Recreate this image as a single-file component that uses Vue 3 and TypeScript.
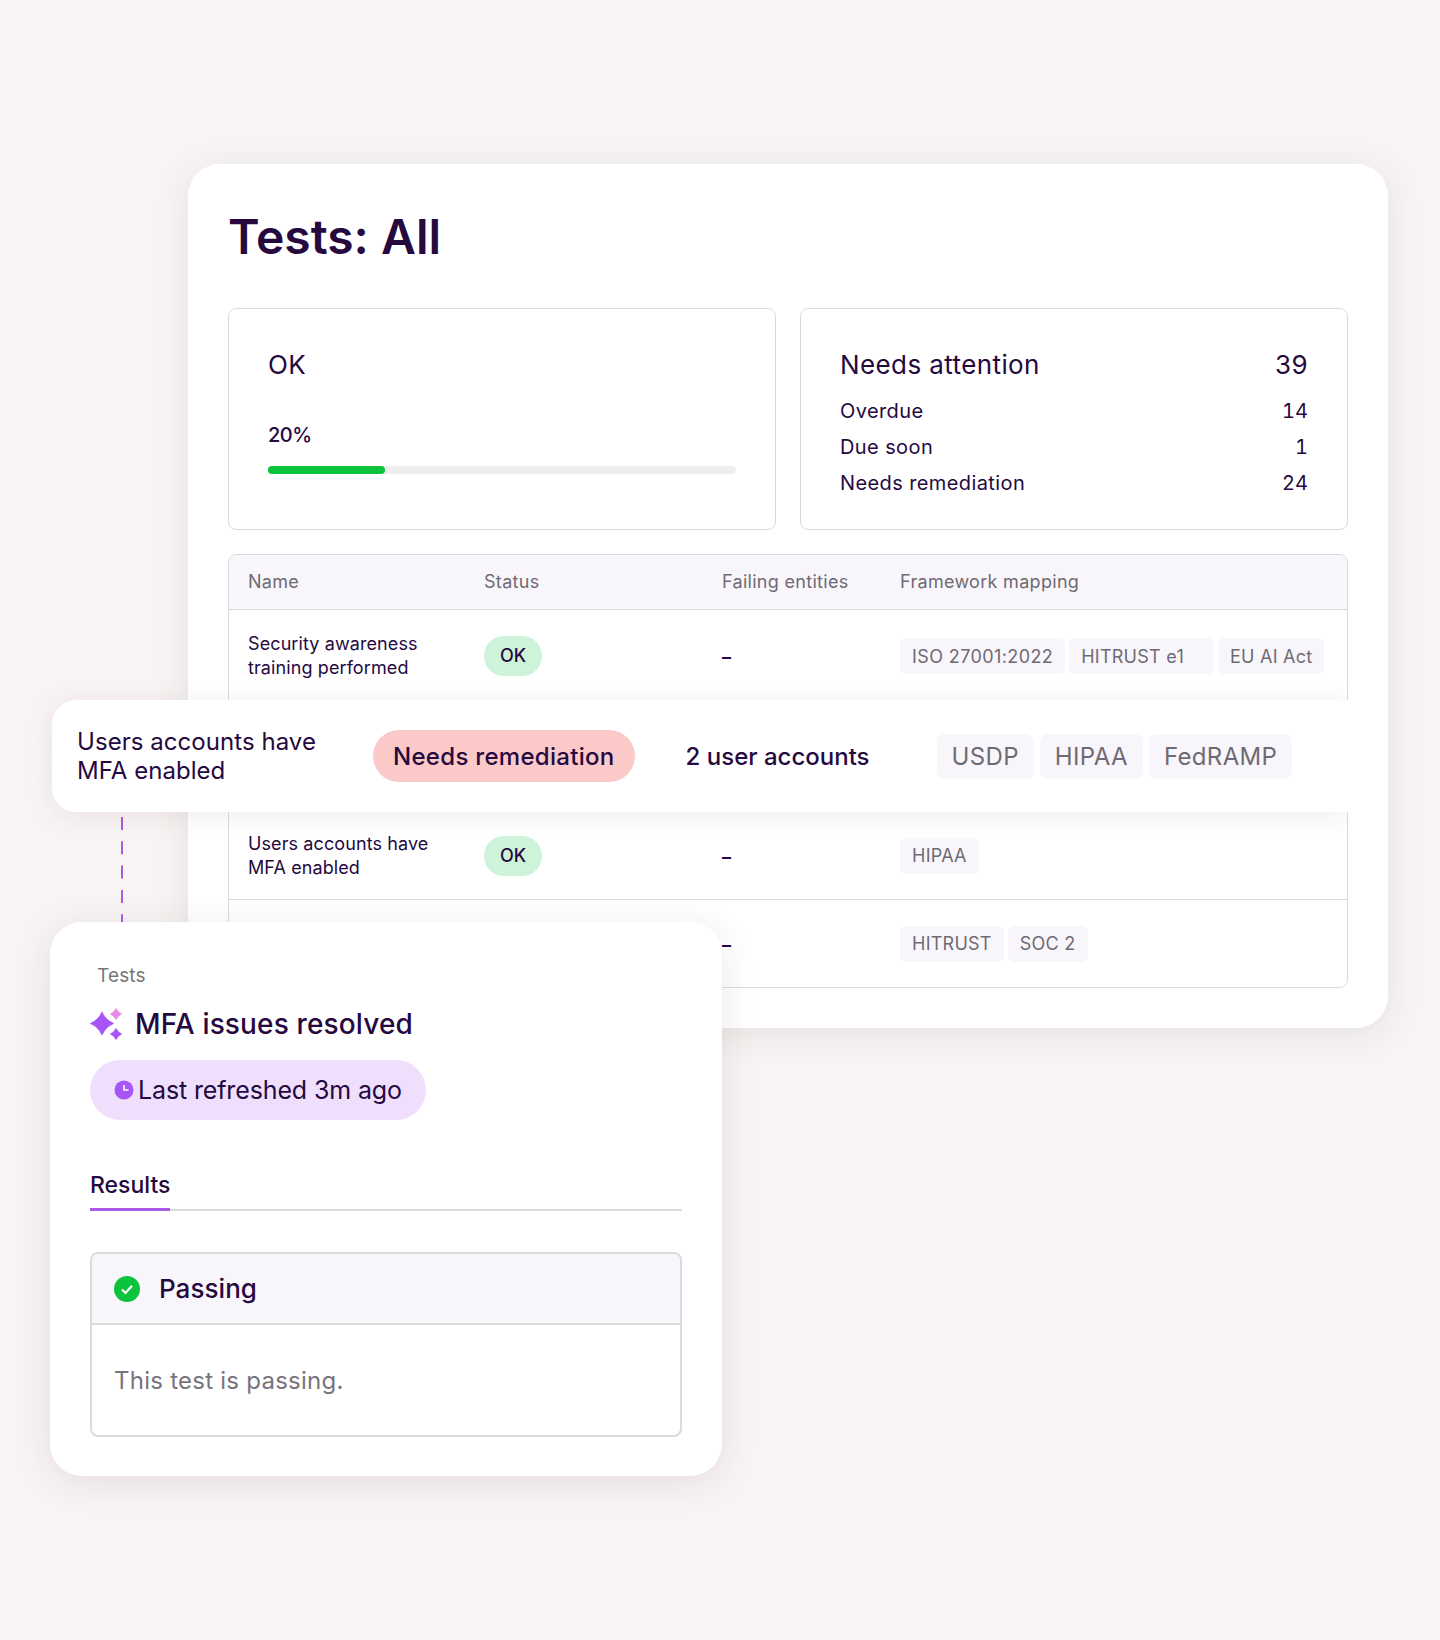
<script setup lang="ts">
interface Row {
  name: string[]
  ok: boolean
  tags: string[]
  cls: string
}
const rows: Row[] = [
  { name: ['Security awareness', 'training performed'], ok: true, tags: ['ISO 27001:2022', 'HITRUST e1', 'EU AI Act'], cls: 'row-a' },
  { name: [], ok: false, tags: [], cls: 'row-b' },
  { name: ['Users accounts have', 'MFA enabled'], ok: true, tags: ['HIPAA'], cls: 'row-c' },
  { name: [], ok: false, tags: ['HITRUST', 'SOC 2'], cls: 'row-d' },
]
const attention = [
  { label: 'Overdue', value: 14 },
  { label: 'Due soon', value: 1 },
  { label: 'Needs remediation', value: 24 },
]
function star(cx: number, cy: number, r: number): string {
  const k = r * 0.3
  return `M${cx} ${cy - r}Q${cx + k} ${cy - k} ${cx + r} ${cy}Q${cx + k} ${cy + k} ${cx} ${cy + r}Q${cx - k} ${cy + k} ${cx - r} ${cy}Q${cx - k} ${cy - k} ${cx} ${cy - r}Z`
}
</script>

<template>
  <div class="stage">
    <section class="main-card">
      <h1 class="title">Tests: All</h1>
      <div class="summary">
        <div class="box">
          <div class="box-head">OK</div>
          <div class="pct">20%</div>
          <div class="track"><div class="fill" :style="{ width: '25%' }"></div></div>
        </div>
        <div class="box">
          <div class="box-head split"><span>Needs attention</span><span>39</span></div>
          <div class="attn">
            <div v-for="a in attention" :key="a.label" class="attn-row">
              <span>{{ a.label }}</span><span class="num">{{ a.value }}</span>
            </div>
          </div>
        </div>
      </div>
      <div class="table">
        <div class="thead grid">
          <span>Name</span><span>Status</span><span>Failing entities</span><span>Framework mapping</span>
        </div>
        <div v-for="(r, i) in rows" :key="i" class="trow grid" :class="r.cls">
          <div class="name"><div v-for="l in r.name" :key="l">{{ l }}</div></div>
          <div><span v-if="r.ok" class="ok">OK</span></div>
          <div class="dash"><span v-if="r.cls !== 'row-b'">–</span></div>
          <div class="tags">
            <span
              v-for="t in r.tags"
              :key="t"
              class="tag"
              :class="{ wide: t === 'HITRUST e1', iso: t === 'ISO 27001:2022' }"
            >{{ t }}</span>
          </div>
        </div>
      </div>
    </section>

    <svg class="connector" width="2" height="110" viewBox="0 0 2 110">
      <line x1="1" y1="5" x2="1" y2="110" stroke="#a95ae6" stroke-width="2" stroke-dasharray="13 11.3" />
    </svg>

    <div class="strip">
      <div class="strip-name">Users accounts have<br />MFA enabled</div>
      <span class="remed">Needs remediation</span>
      <span class="strip-count">2 user accounts</span>
      <div class="strip-tags">
        <span class="big-tag">USDP</span>
        <span class="big-tag">HIPAA</span>
        <span class="big-tag">FedRAMP</span>
      </div>
    </div>

    <section class="detail">
      <div class="crumb">Tests</div>
      <div class="detail-title">
        <svg width="32" height="32" viewBox="0 0 32 32">
          <path :d="star(12, 15.5, 11.6)" fill="#a855f7" stroke="#a855f7" stroke-width="0.8" stroke-linejoin="round" />
          <path :d="star(26, 6, 5.6)" fill="#e78ae6" stroke="#e78ae6" stroke-width="0.8" stroke-linejoin="round" />
          <path :d="star(26, 26, 5.6)" fill="#a855f7" stroke="#a855f7" stroke-width="0.8" stroke-linejoin="round" />
        </svg>
        <span>MFA issues resolved</span>
      </div>
      <div class="refresh">
        <svg width="20" height="20" viewBox="0 0 20 20">
          <circle cx="10" cy="10" r="9.5" fill="#a855f7" />
          <path d="M10 5v5h4.5" fill="none" stroke="#fff" stroke-width="1.6" />
        </svg>
        <span>Last refreshed 3m ago</span>
      </div>
      <div class="tabs"><span class="tab">Results</span></div>
      <div class="result">
        <div class="result-head">
          <svg width="26" height="26" viewBox="0 0 26 26">
            <circle cx="13" cy="13" r="13" fill="#0bc43b" />
            <path d="M8 13.5l3.5 3.5L18 9.8" fill="none" stroke="#fff" stroke-width="2.2" />
          </svg>
          <span>Passing</span>
        </div>
        <div class="result-body">This test is passing.</div>
      </div>
    </section>
  </div>
</template>

<style>
html, body {
  margin: 0;
  background: #f8f4f3;
}
</style>

<style scoped>
.stage {
  position: relative;
  box-sizing: border-box;
  width: 1440px;
  height: 1640px;
  padding: 164px 52px 0 188px;
  background: #f8f4f3;
  font-family: Inter, "Liberation Sans", sans-serif;
  color: #25093f;
}
.main-card {
  box-sizing: border-box;
  width: 1200px;
  height: 864px;
  padding: 40px;
  background: #fff;
  border-radius: 32px;
  box-shadow: 0 6px 36px rgba(60, 40, 40, 0.09);
}
.title {
  margin: 0;
  height: 104px;
  font-size: 48px;
  line-height: 66px;
  font-weight: 600;
}
.summary {
  display: grid;
  grid-template-columns: 548px 548px;
  gap: 24px;
}
.box {
  box-sizing: border-box;
  height: 222px;
  padding: 40px 39px;
  border: 1px solid #dcdadd;
  border-radius: 8px;
}
.box-head {
  font-size: 26px;
  line-height: 32px;
  letter-spacing: 0.4px;
}
.split, .attn-row {
  display: flex;
  justify-content: space-between;
}
.pct {
  margin-top: 39px;
  font-size: 20px;
  line-height: 30px;
  font-weight: 500;
  letter-spacing: -0.5px;
}
.track {
  margin-top: 16px;
  height: 8px;
  border-radius: 4px;
  background: #efeeee;
}
.fill {
  height: 8px;
  border-radius: 4px;
  background: #0bc43b;
}
.attn {
  margin-top: 18px;
  display: flex;
  flex-direction: column;
  gap: 12px;
}
.attn-row {
  font-size: 20px;
  line-height: 24px;
  letter-spacing: 0.4px;
}
.num {
  font-variant-numeric: tabular-nums;
  letter-spacing: 0;
}
.table {
  margin-top: 24px;
  border: 1px solid #dcdadd;
  border-radius: 8px;
  overflow: hidden;
}
.grid {
  display: grid;
  grid-template-columns: 236px 238px 178px 1fr;
  padding-left: 19px;
  align-items: center;
}
.thead {
  box-sizing: border-box;
  height: 55px;
  padding-bottom: 2px;
  background: #f9f6fb;
  border-bottom: 1px solid #dcdadd;
  font-size: 18px;
  letter-spacing: 0.3px;
  color: #6e6a75;
}
.trow {
  box-sizing: border-box;
  font-size: 18px;
  line-height: 24px;
}
.name {
  letter-spacing: 0.1px;
}
.row-a { height: 92px; }
.row-b { height: 110px; }
.row-c { height: 88px; border-bottom: 1px solid #dcdadd; }
.row-d { height: 87px; }
.ok {
  display: inline-flex;
  align-items: center;
  justify-content: center;
  width: 58px;
  height: 40px;
  border-radius: 20px;
  background: #cdf3d8;
  font-weight: 500;
}
.dash {
  padding-top: 2px;
  font-weight: 600;
}
.tags {
  display: flex;
  gap: 4px;
}
.tag {
  box-sizing: border-box;
  display: inline-flex;
  align-items: center;
  height: 36px;
  padding: 1px 12px 0;
  border-radius: 6px;
  background: #f9f6fb;
  color: #6e6a75;
  letter-spacing: 0.25px;
}
.tag.iso {
  letter-spacing: 0.4px;
}
.tag.wide {
  padding-right: 30px;
}
.connector {
  position: absolute;
  left: 121px;
  top: 812px;
}
.strip {
  position: absolute;
  left: 52px;
  top: 700px;
  width: 1296px;
  height: 112px;
  box-sizing: border-box;
  padding-left: 25px;
  display: flex;
  align-items: center;
  background: #fff;
  border-radius: 24px 0 0 24px;
  box-shadow: 0 4px 28px rgba(60, 40, 40, 0.08);
  clip-path: inset(-50px 0 -50px -50px);
  font-size: 24px;
  letter-spacing: 0.05px;
}
.strip-name {
  width: 296px;
  line-height: 29.5px;
}
.remed {
  display: inline-flex;
  align-items: center;
  height: 52px;
  padding: 0 20px;
  border-radius: 26px;
  background: #fbc9c7;
  font-weight: 450;
  letter-spacing: 0.3px;
}
.strip-count {
  margin-left: 51px;
  font-weight: 450;
  letter-spacing: 0;
}
.strip-tags {
  margin-left: 67px;
  display: flex;
  gap: 6px;
}
.big-tag {
  display: inline-flex;
  align-items: center;
  height: 45px;
  padding: 0 15px;
  border-radius: 8px;
  background: #f9f6fb;
  color: #6e6a75;
  letter-spacing: 0.35px;
}
.detail {
  position: absolute;
  left: 50px;
  top: 922px;
  width: 672px;
  height: 554px;
  box-sizing: border-box;
  padding: 40px;
  background: #fff;
  border-radius: 32px;
  box-shadow: 0 6px 36px rgba(60, 40, 40, 0.1);
}
.crumb {
  padding-top: 1px;
  height: 25px;
  padding-left: 7px;
  font-size: 19px;
  line-height: 26px;
  letter-spacing: 0.15px;
  color: #777;
}
.detail-title {
  margin-top: 20px;
  display: flex;
  align-items: center;
  gap: 13px;
  height: 32px;
  font-size: 28px;
  font-weight: 450;
  letter-spacing: 0.15px;
}
.refresh {
  margin-top: 20px;
  display: inline-flex;
  align-items: center;
  gap: 4px;
  height: 60px;
  padding: 0 24px;
  border-radius: 30px;
  background: #efdffd;
  font-size: 25px;
  letter-spacing: -0.13px;
  line-height: 30px;
}
.tabs {
  margin-top: 44px;
  height: 47px;
  box-sizing: border-box;
  border-bottom: 2px solid #dcdadd;
}
.tab {
  display: inline-block;
  height: 47px;
  box-sizing: border-box;
  border-bottom: 3px solid #a95ae6;
  font-size: 23px;
  line-height: 42px;
  font-weight: 450;
}
.result {
  margin-top: 41px;
  height: 185px;
  box-sizing: border-box;
  border: 2px solid #dcdadd;
  border-radius: 8px;
  overflow: hidden;
}
.result-head {
  box-sizing: border-box;
  height: 71px;
  display: flex;
  align-items: center;
  gap: 19px;
  padding-left: 22px;
  background: #f9f6fb;
  border-bottom: 2px solid #dcdadd;
  font-size: 26px;
  font-weight: 450;
  letter-spacing: 0.05px;
}
.result-body {
  padding: 40px 0 0 22px;
  font-size: 24px;
  line-height: 32px;
  letter-spacing: 0.25px;
  color: #77747c;
}
</style>
